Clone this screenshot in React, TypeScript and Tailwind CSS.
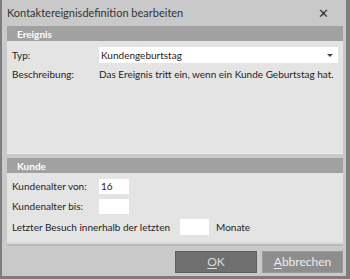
const font = { fontFamily: 'Lato, "Liberation Sans", sans-serif' };

function SectionHeader({ title }: { title: string }) {
    return (
        <div className="h-[15px] bg-[#a1a1a1] pl-[10px] flex items-center text-[10px] font-bold text-white leading-none">
            {title}
        </div>
    );
}

export default function App() {
    return (
        <div
            className="w-[350px] h-[279px] bg-[#c9c9c9] border-l-2 border-r-4 border-b-[3px] border-[#7d7d7d] flex flex-col text-[#1e1e1e] text-[10px] whitespace-nowrap"
            style={font}
        >
            {/* Titelleiste */}
            <div className="h-[26px] flex items-center justify-between pl-[5px] pr-[17px] shrink-0">
                <span className="text-[#333] text-[11px]">Kontaktereignisdefinition bearbeiten</span>
                <span className="text-[#333] text-[13px] leading-none">✕</span>
            </div>

            <div className="flex-1 flex flex-col pl-[5px] pr-[3px]">
                {/* Ereignis */}
                <div className="flex flex-col">
                    <SectionHeader title="Ereignis" />
                    <div className="h-[113px] bg-[#e4e4e4] border-b border-[#ececec] pt-[6px] pl-[5px] pr-[5px]">
                        <div className="flex items-center h-[16px]">
                            <span className="w-[87px] shrink-0">Typ:</span>
                            <div className="flex-1 h-[16px] bg-white flex items-center justify-between pl-[2px] pr-[5px]">
                                <span>Kundengeburtstag</span>
                                <svg width="6" height="3" viewBox="0 0 6 3">
                                    <path d="M0 0h6L3 3z" fill="#444" />
                                </svg>
                            </div>
                        </div>
                        <div className="flex items-center h-[20px] mt-[1px]">
                            <span className="w-[87px] shrink-0">Beschreibung:</span>
                            <span>Das Ereignis tritt ein, wenn ein Kunde Geburtstag hat.</span>
                        </div>
                    </div>
                </div>

                {/* Kunde */}
                <div className="flex flex-col mt-[4px]">
                    <SectionHeader title="Kunde" />
                    <div className="h-[69px] bg-[#e4e4e4] pt-[6px] pl-[5px] flex flex-col gap-[5px]">
                        <div className="flex items-center h-[15px]">
                            <span className="w-[87px] shrink-0">Kundenalter von:</span>
                            <div className="w-[30px] h-[15px] bg-white pl-[2px] flex items-center">16</div>
                        </div>
                        <div className="flex items-center h-[15px]">
                            <span className="w-[87px] shrink-0">Kundenalter bis:</span>
                            <div className="w-[30px] h-[15px] bg-white" />
                        </div>
                        <div className="flex items-center h-[16px]">
                            <span className="w-[168px] shrink-0">Letzter Besuch innerhalb der letzten</span>
                            <div className="w-[29px] h-[16px] bg-white" />
                            <span className="ml-[7px]">Monate</span>
                        </div>
                    </div>
                    <div className="h-[2px] bg-[#d9d9d9]" />
                    <div className="h-[2px] bg-[#b9b9b9]" />
                </div>

                {/* Buttons */}
                <div className="flex justify-end gap-[5px] mt-[5px]">
                    <button className="w-[82px] h-[22px] bg-[#6f6f6f] border border-[#5e5e5e] text-[#dcdcdc] text-[12px]">
                        <span className="underline underline-offset-2">O</span>K
                    </button>
                    <button className="w-[81px] h-[22px] bg-[#8d8d8d] border border-[#9a9a9a] text-[#ececec] text-[12px]">
                        <span className="underline underline-offset-2">A</span>bbrechen
                    </button>
                </div>
            </div>
        </div>
    );
}
